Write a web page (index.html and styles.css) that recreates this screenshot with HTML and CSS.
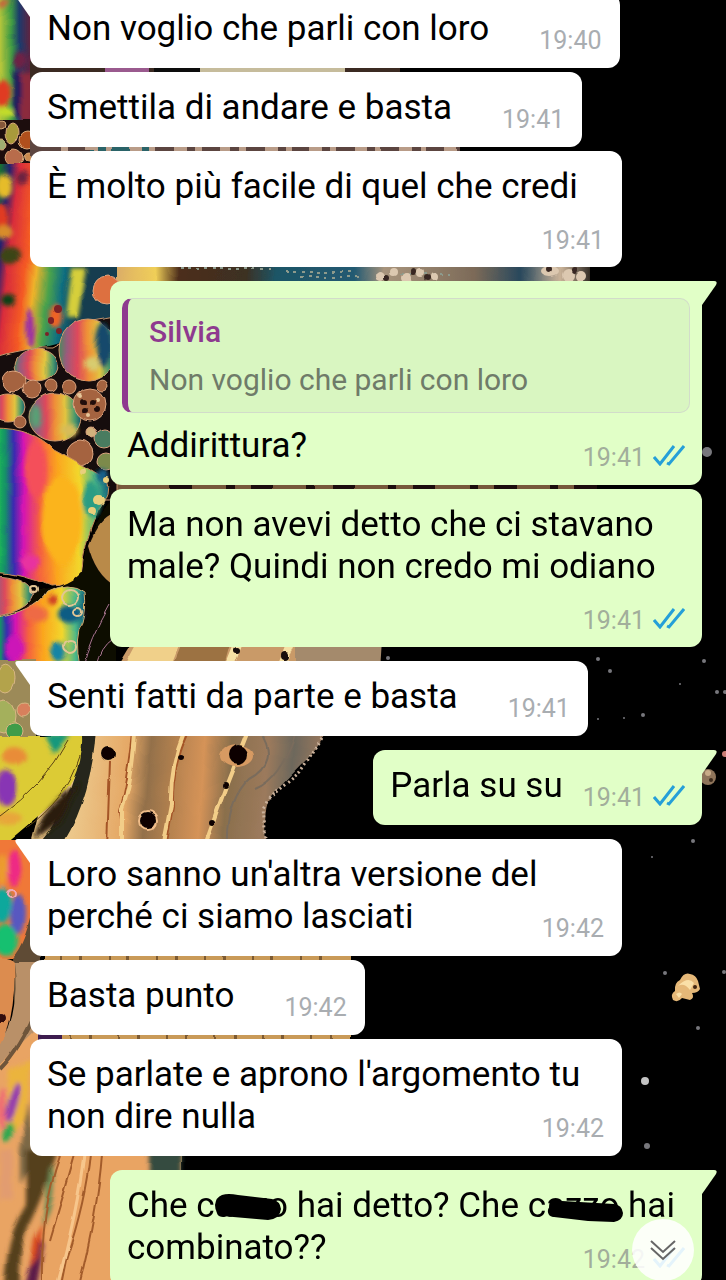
FILE: index.html
```html
<!DOCTYPE html>
<html lang="it">
<head>
  <meta charset="UTF-8" />
  <meta name="viewport" content="width=device-width, initial-scale=1.0"/>
  <title>Chat</title>
  <link rel="stylesheet" href="styles.css">
</head>
<body>
  <svg class="wallpaper" viewBox="0 0 726 1280" preserveAspectRatio="xMinYMin slice" aria-hidden="true">
    <defs>
      <linearGradient id="film">
        <stop offset="0" stop-color="#20d24a"/>
        <stop offset=".1" stop-color="#168f68"/>
        <stop offset=".17" stop-color="#3a2bb0"/>
        <stop offset=".26" stop-color="#d412b4"/>
        <stop offset=".4" stop-color="#f5623e"/>
        <stop offset=".55" stop-color="#fba51e"/>
        <stop offset=".75" stop-color="#f2d62c"/>
        <stop offset=".9" stop-color="#4bb888"/>
        <stop offset="1" stop-color="#12607c"/>
      </linearGradient>
      <linearGradient id="cell">
        <stop offset="0" stop-color="#4c8a5c"/>
        <stop offset=".14" stop-color="#9a5a7c"/>
        <stop offset=".32" stop-color="#dd4a5c"/>
        <stop offset=".5" stop-color="#ef9038"/>
        <stop offset=".7" stop-color="#e2c440"/>
        <stop offset=".88" stop-color="#4c9a6c"/>
        <stop offset="1" stop-color="#175a6c"/>
      </linearGradient>
      <linearGradient id="top-film" gradientUnits="userSpaceOnUse" x1="0" x2="109" y1="0" y2="12">
        <stop offset="0" stop-color="#3f9a2c"/>
        <stop offset=".16" stop-color="#177a2a"/>
        <stop offset=".25" stop-color="#25206e"/>
        <stop offset=".34" stop-color="#d82c3c"/>
        <stop offset=".5" stop-color="#f45a24"/>
        <stop offset=".6" stop-color="#efb22a"/>
        <stop offset=".72" stop-color="#4aa24c"/>
        <stop offset=".85" stop-color="#117080"/>
        <stop offset="1" stop-color="#123c50"/>
      </linearGradient>
      <linearGradient id="corner" gradientUnits="userSpaceOnUse" x1="0" x2="32" y1="0" y2="0">
        <stop offset="0" stop-color="#b6c63a"/>
        <stop offset=".35" stop-color="#3d9a44"/>
        <stop offset=".6" stop-color="#1d3a6c"/>
        <stop offset="1" stop-color="#6c2038"/>
      </linearGradient>
      <linearGradient id="sand" gradientUnits="userSpaceOnUse" x1="80" x2="330" y1="740" y2="760">
        <stop offset="0" stop-color="#ecc78a"/>
        <stop offset=".2" stop-color="#e5a866"/>
        <stop offset=".28" stop-color="#93704a"/>
        <stop offset=".4" stop-color="#b98450"/>
        <stop offset=".5" stop-color="#d59358"/>
        <stop offset=".6" stop-color="#8a6f4c"/>
        <stop offset=".75" stop-color="#9c7a5c"/>
        <stop offset=".85" stop-color="#6d685c"/>
        <stop offset="1" stop-color="#a37a5c"/>
      </linearGradient>
      <linearGradient id="strip" gradientUnits="userSpaceOnUse" x1="30" x2="600" y1="0" y2="0">
        <stop offset="0" stop-color="#e0483a"/>
        <stop offset=".06" stop-color="#efae30"/>
        <stop offset=".09" stop-color="#2d8f84"/>
        <stop offset=".14" stop-color="#d8a86a"/>
        <stop offset=".22" stop-color="#f0cf58"/>
        <stop offset=".26" stop-color="#4d2e1c"/>
        <stop offset=".38" stop-color="#3c3022"/>
        <stop offset=".43" stop-color="#1d5566"/>
        <stop offset=".57" stop-color="#245a72"/>
        <stop offset=".62" stop-color="#a8947c"/>
        <stop offset=".78" stop-color="#7c6a58"/>
        <stop offset=".86" stop-color="#28485c"/>
        <stop offset=".93" stop-color="#c9b298"/>
        <stop offset="1" stop-color="#000"/>
      </linearGradient>
      <filter id="soft"><feGaussianBlur stdDeviation="2"/></filter>
      <filter id="ripple" filterUnits="userSpaceOnUse" x="-20" y="-20" width="766" height="1320">
        <feTurbulence type="fractalNoise" baseFrequency=".05" numOctaves="1" seed="4"/>
        <feDisplacementMap in="SourceGraphic" scale="6" xChannelSelector="R" yChannelSelector="G"/>
        <feGaussianBlur stdDeviation=".6"/>
      </filter>
      <symbol id="read" viewBox="0 0 32 21">
        <path d="M1 12L7 19L21 1M14 18L16 19L31 1" fill="none" stroke="#259fd8" stroke-width="3"/>
      </symbol>
    </defs>

    <rect width="726" height="1280" fill="#000"/>

    <g filter="url(#ripple)">
      <!-- upper left corner -->
      <path d="M-9 -9H60V150H-9z" fill="url(#corner)"/>
      <g filter="url(#soft)">
        <path d="M0 0h12l-8 8H0z" fill="#c9633a"/>
        <ellipse cx="20" cy="60" rx="7" ry="9" fill="#6e2244"/>
        <ellipse cx="2" cy="94" rx="8" ry="13" fill="#e03a20"/>
        <ellipse cx="6" cy="112" rx="9" ry="5" fill="#c3dc2c"/>
        <path d="M13 72h8v44h-8z" fill="#211a5c"/>
        <path d="M21 72h12v50H21z" fill="#8c2a3c"/>
      </g>
      <path d="M-9 120h46v46H-9z" fill="#1a0c0c"/>
      <g stroke="#d8a878" stroke-width="1">
        <ellipse cx="12" cy="133" rx="6" ry="10" fill="#a89a3a"/>
        <circle cx="1" cy="144" r="5" fill="#9fae72"/>
        <circle cx="1" cy="125" r="4" fill="#86593a"/>
        <circle cx="27" cy="140" r="8" fill="#b0501e"/>
        <circle cx="14" cy="157" r="9" fill="#b86c4c"/>
        <circle cx="29" cy="157" r="5" fill="#c98a50"/>
      </g>

      <!-- coloured bands between the bubbles -->
      <path d="M30 60h370v18H30z" fill="#3a2a22"/>
      <path d="M105 60h45v18h-45z" fill="#9a5a8e"/>
      <path d="M155 60h45v18h-45z" fill="#0d0908"/>
      <path d="M200 60h145v18H200z" fill="#c6bc9c"/>
      <path d="M30 140h430v18H30z" fill="#5c4440"/>
      <path d="M90 140h60v18H90z" fill="#2b6468"/>
      <path d="M60 149h400" stroke="#b99c88" stroke-width="6" stroke-dasharray="6 19 12 8"/>
      <path d="M30 262h560v30H30z" fill="url(#strip)"/>
      <path d="M180 269h90M285 272h70M400 274h50M300 277h60" stroke="#8d9a8c" stroke-width="2" stroke-dasharray="3 5"/>
      <g fill="#dcc8b0">
        <circle cx="380" cy="276" r="5"/><circle cx="394" cy="271" r="4"/><circle cx="406" cy="278" r="5"/><circle cx="420" cy="273" r="4"/>
        <circle cx="434" cy="277" r="4"/><ellipse cx="550" cy="272" rx="9" ry="5"/><circle cx="568" cy="276" r="6"/><circle cx="581" cy="277" r="5"/>
      </g>
      <g fill="#382820"><circle cx="387" cy="277" r="3"/><circle cx="413" cy="272" r="3"/><circle cx="427" cy="278" r="3"/><circle cx="549" cy="270" r="3"/><circle cx="574" cy="271" r="3"/></g>
      <path d="M110 478h480v18H110z" fill="#77583a"/>
      <path d="M170 487h440" stroke="#1a0f0a" stroke-width="18" stroke-dasharray="22 34 8 17"/>

      <!-- oil film and small cells -->
      <path d="M-9 164H116V318L88 322L64 342L40 348L-9 357z" fill="url(#top-film)"/>
      <g filter="url(#soft)">
        <ellipse cx="2" cy="218" rx="7" ry="14" fill="#e03a20"/>
        <ellipse cx="4" cy="186" rx="8" ry="12" fill="#e6bc2c"/>
        <ellipse cx="4" cy="232" rx="9" ry="7" fill="#d88c2c"/>
        <ellipse cx="10" cy="256" rx="10" ry="8" fill="#3a4418"/>
        <ellipse cx="8" cy="300" rx="7" ry="6" fill="#0e4018"/>
        <ellipse cx="30" cy="328" rx="4" ry="20" fill="#9a2aa8"/>
        <ellipse cx="56" cy="316" rx="6" ry="12" fill="#ee6428"/>
        <path d="M72 268h14l-8 50H66z" fill="#d6cf3a"/>
        <circle cx="22" cy="178" r="6" fill="#6a2440"/>
      </g>
      <g fill="#7c2028"><circle cx="58" cy="309" r="4"/><circle cx="52" cy="320" r="3"/><circle cx="59" cy="331" r="3"/><circle cx="47" cy="334" r="2"/></g>
      <path d="M-9 358Q30 346 52 348Q68 340 92 320L116 316V500H60L-9 430z" fill="#140b0a" stroke="#c9966c"/>
      <g fill="url(#cell)" stroke="#d09a70" stroke-width="1">
        <ellipse cx="36" cy="365" rx="21" ry="16"/>
        <ellipse cx="88" cy="350" rx="29" ry="31"/>
        <ellipse cx="8" cy="407" rx="17" ry="14"/>
        <ellipse cx="55" cy="417" rx="26" ry="24"/>
      </g>
      <g filter="url(#soft)">
        <ellipse cx="104" cy="344" rx="8" ry="22" fill="#12486c"/>
        <ellipse cx="92" cy="364" rx="8" ry="6" fill="#d8cc70"/>
        <ellipse cx="36" cy="416" rx="5" ry="12" fill="#58a074"/>
        <ellipse cx="70" cy="430" rx="8" ry="6" fill="#d8bc58"/>
      </g>
      <g stroke="#dca480" stroke-width="1" fill="#a5643f">
        <circle cx="14" cy="381" r="11"/><circle cx="32" cy="389" r="9"/><circle cx="51" cy="385" r="6"/>
        <circle cx="70" cy="388" r="7"/><circle cx="103" cy="386" r="6"/><circle cx="20" cy="422" r="6"/>
        <circle cx="90" cy="405" r="16"/><circle cx="80" cy="453" r="13"/><circle cx="107" cy="290" r="14" fill="#dd7040"/>
        <circle cx="104" cy="438" r="10" fill="#487c60"/><circle cx="106" cy="462" r="9" fill="#7c8a4c"/><circle cx="91" cy="432" r="5" fill="#d3b27c"/>
      </g>
      <g fill="#24100c"><circle cx="83" cy="402" r="3"/><circle cx="92" cy="402" r="3"/><circle cx="97" cy="410" r="3"/><circle cx="85" cy="411" r="3"/></g>
      <g fill="#e6c69a"><circle cx="80" cy="396" r="2"/><circle cx="98" cy="400" r="2"/><circle cx="88" cy="416" r="2"/></g>

      <path d="M-6 428Q34 428 54 450Q84 466 106 480Q112 492 98 510Q82 548 82 572Q78 586 50 586Q24 574 -6 572z" fill="url(#film)" stroke="#c98c58" stroke-width="1"/>
      <g filter="url(#soft)">
        <ellipse cx="62" cy="520" rx="20" ry="44" fill="#fbb41c"/>
        <ellipse cx="92" cy="500" rx="9" ry="18" fill="#2c9c84"/>
        <ellipse cx="36" cy="470" rx="10" ry="28" fill="#f4505a"/>
        <ellipse cx="30" cy="562" rx="10" ry="8" fill="#e832a0"/>
        <ellipse cx="102" cy="476" rx="6" ry="6" fill="#12608c"/>
      </g>
      <g fill="#e9cf7c"><circle cx="99" cy="500" r="5"/><circle cx="92" cy="511" r="4"/><circle cx="84" cy="472" r="3"/><circle cx="106" cy="480" r="3"/></g>
      <path d="M82 572Q86 540 104 508L116 490V662H60L30 620V590Q66 590 82 572z" fill="#0e0706"/>
      <path d="M89 545Q98 520 116 512V586Q96 574 89 545z" fill="#b98a4a"/>
      <path d="M-9 576Q28 576 34 594Q28 612 -9 617z" fill="url(#cell)" stroke="#c4946c" stroke-width="1"/>
      <path d="M-9 618Q34 612 46 592Q70 580 84 592Q86 610 82 624Q74 634 80 668H-9z" fill="url(#film)" stroke="#d0b070" stroke-width="1"/>
      <g filter="url(#soft)">
        <ellipse cx="70" cy="614" rx="12" ry="9" fill="#0d5c84"/>
        <ellipse cx="36" cy="614" rx="12" ry="8" fill="#ee6a44"/>
        <ellipse cx="14" cy="648" rx="9" ry="12" fill="#cc18b8"/>
        <ellipse cx="58" cy="652" rx="8" ry="10" fill="#1484a4"/>
        <circle cx="52" cy="600" r="5" fill="#cf3c28"/>
      </g>
      <g fill="none" stroke="#e2c694" stroke-width="2"><circle cx="70" cy="597" r="8"/><circle cx="78" cy="612" r="4"/><circle cx="70" cy="646" r="6"/><circle cx="34" cy="590" r="3"/></g>
      <path d="M84 666Q90 640 110 605M96 666Q100 648 112 640" fill="none" stroke="#a8788c" stroke-width="1"/>

      <!-- sandy flow -->
      <path d="M134 640H382L376 670H116z" fill="#c99a68"/>
      <path d="M138 640h42l-12 30h-46z" fill="#f0d08a"/>
      <path d="M182 640h50l-8 30h-54z" fill="#9c7242"/>
      <path d="M296 640h86l-2 30h-84z" fill="#a48a6c"/>
      <path d="M240 640l-12 30M292 640l-12 30" stroke="#f5e0a4" stroke-width="8"/>
      <g fill="#170c08"><circle cx="237" cy="651" r="3"/><circle cx="285" cy="656" r="4"/></g>
      <path d="M-9 660H36V745H-9z" fill="#9c8a58"/>
      <g stroke="#d8b684" stroke-width="1"><ellipse cx="6" cy="678" rx="9" ry="14" fill="#b3a34c"/><ellipse cx="4" cy="716" rx="12" ry="16" fill="#a4b05c"/><circle cx="24" cy="710" r="7" fill="#d8805c"/><circle cx="14" cy="730" r="8" fill="#3f9c48"/></g>
      <path d="M60 728H330L310 756L270 797Q262 812 267 848H30z" fill="url(#sand)"/>
      <path d="M322 738L300 772L270 797L263 808L267 848" fill="none" stroke="#c9b09a" stroke-width="3" stroke-dasharray="2 3"/>
      <path d="M82 728H96Q92 800 60 848H34Q80 800 82 728z" fill="#26281a"/>
      <path d="M-9 736H82Q84 782 50 806L-9 856z" fill="#dccb36"/>
      <g filter="url(#soft)">
        <path d="M44 734h26l-16 20z" fill="#18987c"/>
        <ellipse cx="6" cy="788" rx="10" ry="18" fill="#8834b4"/>
        <ellipse cx="14" cy="756" rx="12" ry="9" fill="#e98c38"/>
        <ellipse cx="8" cy="818" rx="14" ry="6" fill="#e8a63a"/>
        <path d="M72 788l8-6-20 40-26 18q6-30 38-52z" fill="#2a1c10"/>
      </g>
      <path d="M68 740Q44 786 0 816M80 756Q66 800 26 828" stroke="#5e4614" fill="none" stroke-width="1"/>
      <path d="M133 732Q128 782 120 810L124 848M110 762L107 848M188 732Q172 766 173 806L166 848" stroke="#a45428" fill="none" stroke-width="2"/>
      <path d="M135 732Q132 784 122 808V848M184 732Q170 766 171 804L163 848M248 730L226 786L204 848" stroke="#f2cd88" fill="none" stroke-width="4"/>
      <path d="M260 732Q280 762 250 778Q226 800 228 848M296 732Q280 780 254 790" stroke="#7a6c5c" fill="none" stroke-width="2"/>
      <ellipse cx="237" cy="756" rx="17" ry="11" fill="#d79a62"/>
      <g fill="#0b0504"><circle cx="238" cy="755" r="10"/><circle cx="108" cy="754" r="7"/><circle cx="181" cy="757" r="3"/><circle cx="225" cy="785" r="3"/><circle cx="212" cy="823" r="3"/></g>
      <circle cx="148" cy="821" r="9" fill="#0b0504" stroke="#f0bc88" stroke-width="2"/>

      <!-- lower left corner -->
      <path d="M-9 840H38V960Q28 950 14 958H-9z" fill="#f07838"/>
      <g filter="url(#soft)">
        <ellipse cx="14" cy="868" rx="7" ry="18" fill="#ee2c84"/>
        <ellipse cx="2" cy="870" rx="5" ry="16" fill="#ec9c2e"/>
        <ellipse cx="2" cy="905" rx="9" ry="18" fill="#10a89c"/>
        <ellipse cx="18" cy="914" rx="8" ry="20" fill="#5858c0"/>
        <ellipse cx="6" cy="940" rx="12" ry="15" fill="#18c070"/>
      </g>
      <circle cx="11" cy="893" r="4" fill="none" stroke="#f0a8b8" stroke-width="2"/>
      <path d="M34 900Q26 944 12 958L16 1040L40 1038V900z" fill="#5e4c34"/>
      <path d="M44 950H350V968H44zM60 1028H350V1046H60z" fill="#c99a58"/>
      <path d="M60 959H340M70 1037H340" stroke="#7c5a30" stroke-width="18" stroke-dasharray="2 17 3 26"/>
      <path d="M36 1028h26v18H36z" fill="#3c1c50"/>
      <path d="M-9 958Q10 956 14 962Q18 1020 -9 1072z" fill="#dc8c50"/>
      <circle cx="1" cy="1018" r="5" fill="#300a10"/>
      <path d="M14 962H38V1038L-9 1080V1060Q22 1020 14 962z" fill="#b99068"/>
      <path d="M38 1028L-9 1074V1290H182V1154H38z" fill="#e9a464"/>
      <path d="M38 1008Q20 1050 0 1070" fill="none" stroke="#6e543a" stroke-width="4"/>
      <g filter="url(#soft)">
        <path d="M8 1070L32 1060L26 1120L4 1140z" fill="#ebb43c"/>
        <ellipse cx="13" cy="1102" rx="5" ry="20" fill="#963cac" transform="rotate(15 13 1102)"/>
        <ellipse cx="8" cy="1132" rx="5" ry="10" fill="#2fa850" transform="rotate(15 8 1132)"/>
        <ellipse cx="2" cy="1110" rx="4" ry="22" fill="#ef6c74"/>
        <path d="M20 1150l10-50 4 55-14 30z" fill="#7c6844"/>
        <path d="M0 1150h12v50H0z" fill="#e29c70"/>
        <path d="M26 1150H58Q42 1200 28 1226Q18 1250 20 1290H4Q6 1236 26 1204z" fill="#54401e"/>
        <path d="M50 1164Q58 1176 50 1212L42 1230Q46 1190 50 1164z" fill="#6c8a54"/>
        <path d="M38 1232l6 12-8 46h-12z" fill="#5c1a48"/>
        <path d="M44 1222l-6 34-8 12 4-28z" fill="#d84a1c"/>
        <path d="M148 1150h34v24h-34z" fill="#344c40"/>
      </g>
      <path d="M60 1156Q40 1210 42 1290M90 1154Q86 1200 66 1260L60 1290M102 1154Q98 1210 78 1290M75 1154Q62 1200 50 1240" stroke="#a35c2c" fill="none" stroke-width="2"/>
      <path d="M84 1154Q78 1210 56 1290" stroke="#f7c68c" fill="none" stroke-width="3"/>
    </g>

    <!-- stars -->
    <g fill="#77777c">
      <circle cx="388" cy="658" r="2"/><circle cx="598" cy="659" r="2"/><circle cx="610" cy="671" r="2"/><circle cx="704" cy="661" r="2"/>
      <circle cx="717" cy="692" r="2"/><circle cx="725" cy="692" r="2"/><circle cx="643" cy="715" r="2"/><circle cx="598" cy="719" r="1"/>
      <circle cx="680" cy="684" r="1"/><circle cx="624" cy="718" r="1"/><circle cx="693" cy="841" r="2"/><circle cx="652" cy="857" r="1"/>
      <circle cx="665" cy="973" r="2"/><circle cx="724" cy="972" r="2"/><circle cx="698" cy="1028" r="2"/><circle cx="647" cy="1146" r="3"/>
      <circle cx="707" cy="452" r="5"/>
    </g>
    <circle cx="645" cy="1081" r="4" fill="#c4c4c4"/>
    <circle cx="725" cy="754" r="3" fill="#c87c74"/>
    <circle cx="708" cy="777" r="8" fill="#8e745a"/>
    <circle cx="708" cy="773" r="3" fill="#c8ab88"/><circle cx="711" cy="780" r="2" fill="#3c2a1c"/>
    <path d="M673 1000Q670 994 675 991Q674 983 680 980Q684 972 690 974Q696 975 698 981L700 989Q698 993 692 993Q695 998 690 1000L682 998Q678 1003 673 1000z" fill="#e5b878"/>
    <path d="M678 986Q688 976 694 983L690 990Q684 982 678 986zM676 994q4-3 6 0l-3 4z" fill="#fae0a8"/>
    <circle cx="695" cy="987" r="2" fill="#402410"/>
  </svg>

  <main class="chat">
    <article class="message in first">
      <p>Non voglio che parli con loro<span class="meta"><time>19:40</time></span></p>
    </article>
    <article class="message in">
      <p>Smettila di andare e basta<span class="meta"><time>19:41</time></span></p>
    </article>
    <article class="message in">
      <p>È molto più facile di quel che credi<span class="meta"><time>19:41</time></span></p>
    </article>

    <article class="message out first reply">
      <blockquote class="quote">
        <strong>Silvia</strong>
        <span>Non voglio che parli con loro</span>
      </blockquote>
      <p>Addirittura?<span class="meta"><time>19:41</time><svg class="ticks"><use href="#read"/></svg></span></p>
    </article>
    <article class="message out">
      <p>Ma non avevi detto che ci stavano male? Quindi non credo mi odiano<span class="meta"><time>19:41</time><svg class="ticks"><use href="#read"/></svg></span></p>
    </article>

    <article class="message in first">
      <p>Senti fatti da parte e basta<span class="meta"><time>19:41</time></span></p>
    </article>

    <article class="message out first">
      <p>Parla su su<span class="meta"><time>19:41</time><svg class="ticks"><use href="#read"/></svg></span></p>
    </article>

    <article class="message in first">
      <p>Loro sanno un'altra versione del perché ci siamo lasciati<span class="meta"><time>19:42</time></span></p>
    </article>
    <article class="message in">
      <p>Basta punto<span class="meta"><time>19:42</time></span></p>
    </article>
    <article class="message in">
      <p>Se parlate e aprono l'argomento tu non dire nulla<span class="meta"><time>19:42</time></span></p>
    </article>

    <article class="message out first">
      <p>Che <span class="censored">cazzo<svg viewBox="0 0 92 42"><path d="M26 10Q32 8 42 10L76 14Q84 16 85 24Q84 34 72 35L26 31Q19 28 19 20Q20 12 26 10z"/></svg></span> hai detto? Che <span class="censored">cazzo<svg viewBox="0 0 92 42"><path d="M24 14Q28 13 34 16L86 19Q94 20 95 28Q95 35 86 37L60 36L26 32Q20 31 21 23Q21 16 24 14z"/></svg></span> hai combinato??<span class="meta"><time>19:42</time><svg class="ticks"><use href="#read"/></svg></span></p>
    </article>
  </main>

  <button class="scroll-down" type="button" aria-label="Vai in fondo">
    <svg viewBox="0 0 26 22"><path d="M1 2L13 13L25 2M1 9L13 20L25 9"/></svg>
  </button>
</body>
</html>
```
FILE: styles.css
```css
* { box-sizing: border-box; }

body {
  margin: 0;
  height: 100vh;
  overflow: hidden;
  position: relative;
  background-color: #000;
  font-family: Roboto, Arial, sans-serif;
  color: #000;
}

.wallpaper {
  position: absolute;
  top: 0;
  left: 0;
  width: 100%;
  height: 100%;
  z-index: -1;
}

/* thread is scrolled a little past the first bubble */
.chat {
  display: flex;
  flex-direction: column;
  gap: 4px;
  padding: 0 24px 0 30px;
  margin-top: -17px;
}

.message {
  position: relative;
  max-width: calc(100% - 80px);
  padding: 15px 18px 18px 17px;
  border-radius: 12px;
  font-size: 35px;
  line-height: 42px;
}

.message p {
  margin: 0;
}

.message.first {
  margin-top: 10px;
}

.in {
  align-self: flex-start;
  background: #fff;
}

.message.out {
  align-self: flex-end;
  padding-right: 17px;
  background: #e1ffc7;
}

.in.first { border-top-left-radius: 0; }
.out.first { border-top-right-radius: 0; }

/* bubble tails */
.first::before {
  content: "";
  position: absolute;
  top: 0;
  width: 15px;
  height: 24px;
  background: inherit;
}

.in.first::before {
  right: 100%;
  clip-path: path("M3 0H15V24L1 4Q-1 0 3 0z");
}

.out.first::before {
  left: 100%;
  clip-path: path("M12 0H0V24L14 4Q16 0 12 0z");
}

.meta {
  float: right;
  display: flex;
  align-items: baseline;
  gap: 10px;
  margin: 18px 0 -7px 50px;
  font-size: 25px;
  line-height: 30px;
  color: #a9adb1;
}

.out .meta {
  gap: 8px;
  margin-left: 20px;
  color: #a2ae9b;
}

.ticks {
  width: 32px;
  height: 21px;
}

.reply {
  width: 100%;
}

.quote {
  display: flex;
  flex-direction: column;
  margin: 2px -5px 12px -5px;
  padding: 9px 20px 8px 21px;
  border: 1px solid #d2dcca;
  border-left: 6px solid #8e3a8f;
  border-radius: 10px;
  background: #d9f6c1;
  font-size: 30px;
  line-height: 48px;
  color: #6f7b69;
}

.quote strong {
  font-weight: 500;
  color: #8e3a8f;
}

.censored {
  position: relative;
}

.censored svg {
  position: absolute;
  top: 0;
  left: 0;
  width: 92px;
  height: 42px;
  overflow: visible;
}

.scroll-down {
  position: fixed;
  right: 32px;
  bottom: -1px;
  display: flex;
  justify-content: center;
  align-items: center;
  width: 62px;
  height: 62px;
  padding: 0;
  border: none;
  border-radius: 50%;
  background: rgba(255, 255, 255, 0.88);
  cursor: pointer;
}

.scroll-down svg {
  width: 26px;
  height: 22px;
  fill: none;
  stroke: #666;
  stroke-width: 2;
}
```
